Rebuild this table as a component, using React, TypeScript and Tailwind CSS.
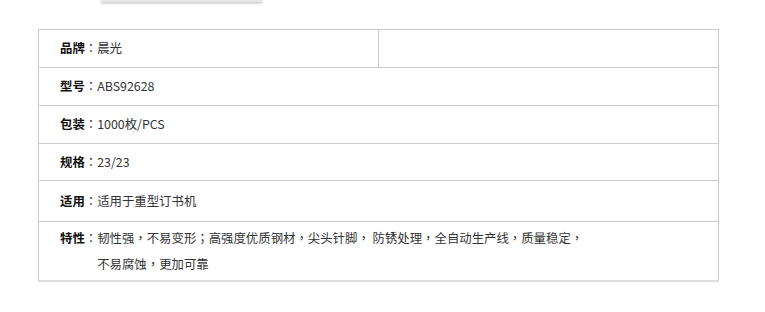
const font = { fontFamily: '"Noto Sans CJK SC", "Noto Sans", sans-serif' };
// centred full-width punctuation
const punctFont = { fontFamily: '"Noto Sans CJK TC", "Noto Sans CJK SC", sans-serif' };

type Spec = { label: string; value: string; h: string };

const rows: Spec[] = [
  { label: "型号", value: "ABS92628", h: "h-[38px]" },
  { label: "包装", value: "1000枚/PCS", h: "h-[38px]" },
  { label: "规格", value: "23/23", h: "h-[37px]" },
  { label: "适用", value: "适用于重型订书机", h: "h-[41px]" },
];

function Txt({ s }: { s: string }) {
  const parts = s.split(/([，：；])/);
  return (
    <>
      {parts.map((p, i) =>
        /^[，：；]$/.test(p) ? (
          <span key={i} style={punctFont}>
            {p}
          </span>
        ) : (
          <span key={i}>{p}</span>
        )
      )}
    </>
  );
}

function Label({ text }: { text: string }) {
  return (
    <span className="shrink-0">
      <span className="font-bold text-[#111]">{text}</span>
      <Txt s="：" />
    </span>
  );
}

export default function App() {
  return (
    <div className="w-[765px] h-[312px] bg-white text-[12.4px] text-[#333]" style={font}>
      {/* bottom edge of the tab bar above */}
      <div className="ml-[101px] w-[161px] h-[2px] bg-[#e6e6e6] shadow-[0_1px_3px_rgba(0,0,0,0.35)]" />

      <div className="mt-[27px] ml-[38px] w-[681px] border border-[#cccccc] border-b-[#dddddd] border-b-2">
        <div className="flex h-[38px] border-b border-[#cccccc]">
          <div className="w-[340px] flex items-center pl-[21px] border-r border-[#cccccc]">
            <Label text="品牌" />
            <span>晨光</span>
          </div>
          <div className="flex-1" />
        </div>

        {rows.map((r) => (
          <div key={r.label} className={`flex items-center pl-[21px] border-b border-[#cccccc] ${r.h}`}>
            <Label text={r.label} />
            <span>{r.value}</span>
          </div>
        ))}

        <div className="flex pl-[21px] pt-[3px] h-[58px] leading-[26px]">
          <Label text="特性" />
          <div className="pr-[80px]">
            <Txt s="韧性强，不易变形；高强度优质钢材，尖头针脚， 防锈处理，全自动生产线，质量稳定，" />
            <br />
            <Txt s="不易腐蚀，更加可靠" />
          </div>
        </div>
      </div>
    </div>
  );
}
